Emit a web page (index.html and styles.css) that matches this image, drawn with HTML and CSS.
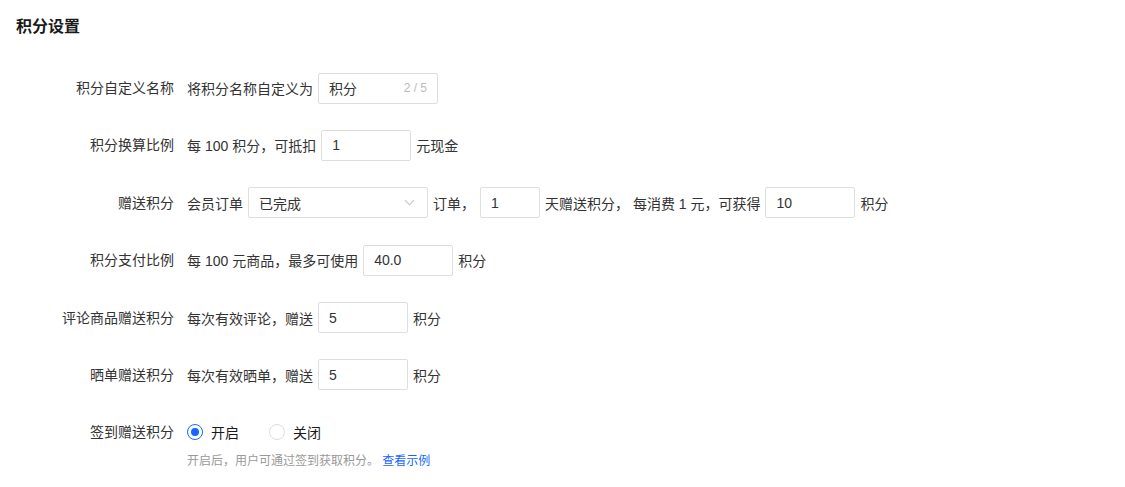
FILE: index.html
```html
<!DOCTYPE html>
<html>

<head>
  <meta charset="utf-8">
  <title>积分设置</title>
  <link rel="stylesheet" href="styles.css">
</head>

<body>
  <div class="page">
    <h2 class="title">积分设置</h2>

    <div class="form">
      <!-- 名称 -->
      <div class="row">
        <label class="label">积分自定义名称</label>
        <div class="field">
          <span>将积分名称自定义为</span>
          <div class="input w120">
            <span class="value">积分</span>
            <span class="count">2 / 5</span>
          </div>
        </div>
      </div>

      <div class="row">
        <label class="label">积分换算比例</label>
        <div class="field">
          <span>每 100 积分，可抵扣</span>
          <div class="input w90"><span class="value">1</span></div>
          <span>元现金</span>
        </div>
      </div>

      <div class="row">
        <label class="label">赠送积分</label>
        <div class="field">
          <span>会员订单</span>
          <div class="input select w180">
            <span class="value">已完成</span>
            <svg class="arrow" viewBox="0 0 12 7">
              <path d="M1 1l5 5 5-5" fill="none" stroke="#c0c4cc" stroke-width="1.2"></path>
            </svg>
          </div>
          <span>订单，</span>
          <div class="input w60"><span class="value">1</span></div>
          <span>天赠送积分， 每消费 1 元，可获得</span>
          <div class="input w90"><span class="value">10</span></div>
          <span>积分</span>
        </div>
      </div>

      <div class="row">
        <label class="label">积分支付比例</label>
        <div class="field">
          <span>每 100 元商品，最多可使用</span>
          <div class="input w90"><span class="value">40.0</span></div>
          <span>积分</span>
        </div>
      </div>

      <div class="row">
        <label class="label">评论商品赠送积分</label>
        <div class="field">
          <span>每次有效评论，赠送</span>
          <div class="input w90"><span class="value">5</span></div>
          <span>积分</span>
        </div>
      </div>

      <div class="row">
        <label class="label">晒单赠送积分</label>
        <div class="field">
          <span>每次有效晒单，赠送</span>
          <div class="input w90"><span class="value">5</span></div>
          <span>积分</span>
        </div>
      </div>

      <div class="row last">
        <label class="label">签到赠送积分</label>
        <div class="field-col">
          <div class="radios">
            <span class="radio checked"><i></i>开启</span>
            <span class="radio"><i></i>关闭</span>
          </div>
          <p class="help">开启后，用户可通过签到获取积分。 <a href="#">查看示例</a></p>
        </div>
      </div>
    </div>
  </div>
</body>

</html>
```

FILE: styles.css
```css
/* Base */
body {
  margin: 0;
  font-family: "Liberation Sans", "Noto Sans CJK SC", sans-serif;
  font-size: 14px;
  color: #333;
  background: #fff;
}

.page {
  padding: 15px 16px;
}

.title {
  margin: 0;
  font-size: 16px;
  font-weight: bold;
  line-height: 24px;
  color: #1a1a1a;
}

/* Form rows */
.form {
  margin-top: 33px;
  display: flex;
  flex-direction: column;
  gap: 25.4px;
}

.row {
  display: flex;
  align-items: flex-start;
}

.label {
  width: 158px;
  flex-shrink: 0;
  line-height: 32px;
  text-align: right;
  color: #333;
}

.field {
  margin-left: 13px;
  height: 32px;
  display: flex;
  align-items: center;
  gap: 5px;
  white-space: nowrap;
}

/* Inputs */
.input {
  box-sizing: border-box;
  height: 31px;
  padding: 0 10px;
  border: 1px solid #dcdee0;
  border-radius: 2px;
  display: flex;
  align-items: center;
  justify-content: space-between;
  color: #333;
}

.w60 { width: 60px; }
.w90 { width: 90px; }
.w120 { width: 120px; }
.w180 { width: 180px; }

.count {
  font-size: 12px;
  color: #bbb;
}

.arrow {
  width: 11px;
  height: 7px;
  margin-right: 2px;
}

/* Radio group */
.field-col {
  margin-left: 13px;
}

.radios {
  height: 32px;
  display: flex;
  align-items: center;
  gap: 30px;
}

.radio {
  display: flex;
  align-items: center;
  gap: 8px;
  color: #1a1a1a;
}

.radio i {
  box-sizing: border-box;
  width: 16px;
  height: 16px;
  border: 1px solid #dcdee0;
  border-radius: 50%;
  position: relative;
}

.radio.checked i {
  border-color: #1966ff;
}

.radio.checked i::after {
  content: "";
  position: absolute;
  left: 3px;
  top: 3px;
  width: 8px;
  height: 8px;
  border-radius: 50%;
  background: #1966ff;
}

.help {
  margin: 5px 0 0;
  font-size: 12px;
  line-height: 16px;
  color: #999;
}

.help a {
  color: #1966ff;
  text-decoration: none;
}
```
